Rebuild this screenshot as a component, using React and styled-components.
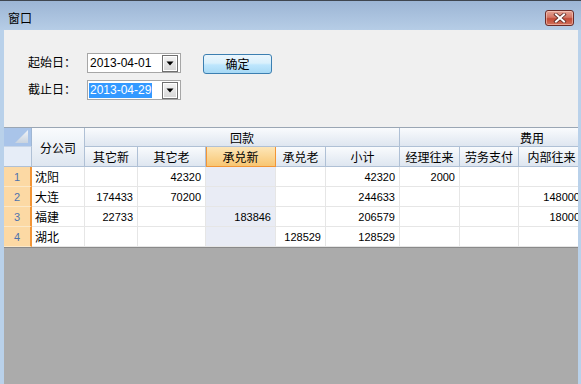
import React from "react";
import styled, { createGlobalStyle } from "styled-components";

const GlobalStyle = createGlobalStyle`
  html, body {
    margin: 0;
    padding: 0;
    background: #b9d1ea;
    overflow: hidden;
  }
  body {
    font-family: "Noto Sans CJK SC", "Liberation Sans", sans-serif;
    font-size: 12px;
  }
`;

// column widths incl. right grid line; the last ones run past the window edge
const cols = [28, 53, 53, 68, 70, 50, 74, 60, 59, 66, 80];

const Frame = styled.div`
  width: 581px;
  height: 384px;
  box-sizing: border-box;
  border-top: 1px solid #3f4650;
  display: flex;
  flex-direction: column;
  background: #b9d1ea;
`;

const TitleBar = styled.div`
  height: 29px;
  flex-shrink: 0;
  display: flex;
  align-items: center;
  justify-content: space-between;
  padding: 5px 7px 0 8px;
  box-sizing: border-box;
  background: linear-gradient(#9cb5d5, #b6cde6);
`;

const Title = styled.span`
  color: #000;
  font-size: 12px;
  line-height: 14px;
`;

const CloseButton = styled.div`
  width: 29px;
  height: 16px;
  box-sizing: border-box;
  border: 1px solid #6b2c28;
  border-radius: 3px;
  background: linear-gradient(#e5a393 0%, #d47665 45%, #c24a36 55%, #d0715c 100%);
  display: flex;
  align-items: center;
  justify-content: center;
  box-shadow: inset 0 0 0 1px rgba(255, 220, 210, 0.5);
`;

const Client = styled.div`
  flex: 1;
  margin: 0 3px 0 4px;
  display: flex;
  flex-direction: column;
  min-height: 0;
`;

const TopPanel = styled.div`
  height: 97px;
  flex-shrink: 0;
  background: #f0f0f0;
  box-sizing: border-box;
  padding: 23px 0 0 24px;
  display: flex;
  align-items: flex-start;
  gap: 22px;
`;

const Fields = styled.div`
  display: flex;
  flex-direction: column;
  gap: 7px;
`;

const FieldRow = styled.div`
  display: flex;
  align-items: center;
  height: 20px;
`;

const Label = styled.span`
  width: 59px;
  color: #000;
  font-size: 12px;
  padding-bottom: 3px;
`;

const DateBox = styled.div`
  width: 94px;
  height: 20px;
  box-sizing: border-box;
  border: 1px solid #a6a6a6;
  background: #fff;
  display: flex;
  align-items: center;
  justify-content: space-between;
  padding: 0 2px 0 1px;
`;

const DateText = styled.span`
  font-family: "Liberation Sans", sans-serif;
  font-size: 12px;
  line-height: 15px;
  padding: 0 1px;
  color: ${(p) => (p.selected ? "#fff" : "#000")};
  background: ${(p) => (p.selected ? "#3399ff" : "transparent")};
`;

const DropButton = styled.div`
  width: 16px;
  height: 17px;
  box-sizing: border-box;
  border: 1px solid #707070;
  background: linear-gradient(#f4f4f4, #d6d6d6);
  box-shadow: inset 0 0 0 1px #fff;
  display: flex;
  align-items: center;
  justify-content: center;
`;

const OkButton = styled.button`
  margin-top: 1px;
  width: 69px;
  height: 20px;
  box-sizing: border-box;
  border: 1px solid #3c7fb1;
  border-radius: 3px;
  background: linear-gradient(#ebf6fd 0%, #d9f0fc 45%, #bee6fd 55%, #a7d9f5 100%);
  font-family: "Noto Sans CJK SC", sans-serif;
  font-size: 12px;
  color: #000;
  padding: 0;
  line-height: 16px;
`;

const GridArea = styled.div`
  flex: 1;
  background: #ababab;
  overflow: hidden;
  min-height: 0;
`;

const Sheet = styled.div`
  display: grid;
  grid-template-columns: ${cols.map((c) => c + "px").join(" ")};
  grid-template-rows: 19px repeat(5, 20px);
  width: max-content;
  border-top: 1px solid #9aa6b4;
  border-bottom: 1px solid #8a8a8a;
  background: #fff;
`;

const Cell = styled.div`
  box-sizing: border-box;
  border-right: 1px solid #e6e6e6;
  border-bottom: 1px solid #e6e6e6;
  display: flex;
  align-items: center;
  justify-content: ${(p) => (p.num ? "flex-end" : "flex-start")};
  padding: ${(p) => (p.num ? "0 4px 0 0" : "0 0 0 3px")};
  font-family: ${(p) =>
    p.num ? '"Liberation Sans", sans-serif' : '"Noto Sans CJK SC", sans-serif'};
  font-size: ${(p) => (p.num ? "11px" : "12px")};
  color: #000;
  background: ${(p) => (p.active ? "#e9ecf5" : "#fff")};
  white-space: nowrap;
  overflow: hidden;
`;

const HeadCell = styled.div`
  box-sizing: border-box;
  grid-column: span ${(p) => p.span || 1};
  grid-row: span ${(p) => p.rows || 1};
  border-right: 1px solid ${(p) => (p.active ? "#f29536" : "#afc0d5")};
  border-bottom: 1px solid ${(p) => (p.active ? "#f29536" : "#afc0d5")};
  box-shadow: ${(p) => (p.active ? "inset 1px 0 0 #f29536" : "none")};
  background: ${(p) =>
    p.active
      ? "linear-gradient(#fde6b8, #f8c672)"
      : "linear-gradient(#f9fbfd, #dee6f0)"};
  display: flex;
  align-items: center;
  justify-content: center;
  font-size: 12px;
  color: #000;
  white-space: nowrap;
  overflow: hidden;
`;

const Corner = styled.div`
  box-sizing: border-box;
  background: #a9c4e9;
  border-right: 1px solid #9fb6d3;
  border-bottom: 1px solid #c8d6e8;
  display: flex;
  align-items: flex-end;
  justify-content: flex-end;
  padding: 0 3px 3px 0;
`;

const CornerLower = styled.div`
  box-sizing: border-box;
  background: #e6edf7;
  border-right: 1px solid #afc0d5;
  border-bottom: 1px solid #afc0d5;
`;

const RowHead = styled.div`
  box-sizing: border-box;
  background: #fcd9a4;
  border-right: 2px solid #f29536;
  border-bottom: 1px solid #fbe8c8;
  display: flex;
  align-items: center;
  justify-content: center;
  font-family: "Liberation Sans", sans-serif;
  font-size: 11px;
  color: #4f73ad;
`;

const subHeads = ["其它新", "其它老", "承兑新", "承兑老", "小计", "经理往来", "劳务支付", "内部往来", ""];

const rows = [
  { name: "沈阳", v: ["", "42320", "", "", "42320", "2000", "", "", ""] },
  { name: "大连", v: ["174433", "70200", "", "", "244633", "", "", "148000", ""] },
  { name: "福建", v: ["22733", "", "183846", "", "206579", "", "", "18000", ""] },
  { name: "湖北", v: ["", "", "", "128529", "128529", "", "", "", ""] },
];

const ACTIVE_COL = 2;

const CloseIcon = () => (
  <svg width="14" height="10" viewBox="0 0 14 10">
    <path d="M3 1.5 L11 8.5 M11 1.5 L3 8.5" stroke="#5b2a24" strokeWidth="3.6" strokeLinecap="square" />
    <path d="M3 1.5 L11 8.5 M11 1.5 L3 8.5" stroke="#fff" strokeWidth="2" strokeLinecap="square" />
  </svg>
);

const Arrow = () => (
  <svg width="8" height="5" viewBox="0 0 8 5">
    <path d="M0.5 0.5 H7.5 L4 4.5 Z" fill="#000" />
  </svg>
);

const CornerTriangle = () => (
  <svg width="13" height="13" viewBox="0 0 13 13">
    <defs>
      <linearGradient id="tri" x1="0" y1="0" x2="0" y2="1">
        <stop offset="0" stopColor="#f1f4f8" />
        <stop offset="1" stopColor="#c9d3df" />
      </linearGradient>
    </defs>
    <path d="M13 0 V13 H0 Z" fill="url(#tri)" />
  </svg>
);

const DateField = ({ label, value, selected }) => (
  <FieldRow>
    <Label>{label}</Label>
    <DateBox>
      <DateText selected={selected}>{value}</DateText>
      <DropButton>
        <Arrow />
      </DropButton>
    </DateBox>
  </FieldRow>
);

export default function App() {
  return (
    <>
      <GlobalStyle />
      <Frame>
        <TitleBar>
          <Title>窗口</Title>
          <CloseButton>
            <CloseIcon />
          </CloseButton>
        </TitleBar>
        <Client>
          <TopPanel>
            <Fields>
              <DateField label="起始日：" value="2013-04-01" />
              <DateField label="截止日：" value="2013-04-29" selected />
            </Fields>
            <OkButton>确定</OkButton>
          </TopPanel>
          <GridArea>
            <Sheet>
              <Corner>
                <CornerTriangle />
              </Corner>
              <HeadCell rows={2}>分公司</HeadCell>
              <HeadCell span={5}>回款</HeadCell>
              <HeadCell span={4}>费用</HeadCell>
              <CornerLower />
              {subHeads.map((h, i) => (
                <HeadCell key={i} active={i === ACTIVE_COL}>
                  {h}
                </HeadCell>
              ))}
              {rows.map((r, ri) => (
                <React.Fragment key={ri}>
                  <RowHead>{ri + 1}</RowHead>
                  <Cell>{r.name}</Cell>
                  {r.v.map((v, ci) => (
                    <Cell key={ci} num active={ci === ACTIVE_COL}>
                      {v}
                    </Cell>
                  ))}
                </React.Fragment>
              ))}
            </Sheet>
          </GridArea>
        </Client>
      </Frame>
    </>
  );
}
